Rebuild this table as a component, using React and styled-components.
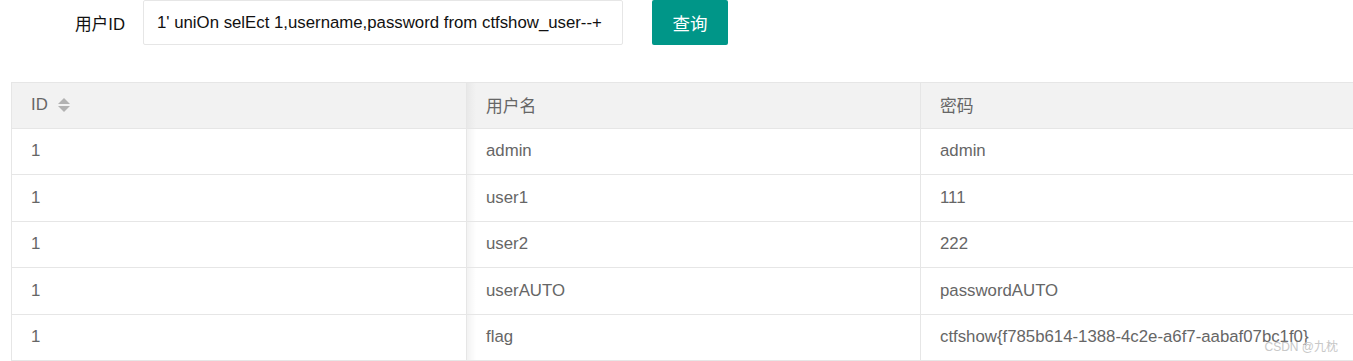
import React from "react";
import styled, { createGlobalStyle } from "styled-components";

const GlobalStyle = createGlobalStyle`
  html, body {
    margin: 0;
    padding: 0;
    background: #fff;
    overflow: hidden;
  }
  body {
    font-family: "Liberation Sans", Arial, "Noto Sans CJK SC", sans-serif;
    color: #333;
  }
`;

const rows = [
  { id: "1", name: "admin", pass: "admin" },
  { id: "1", name: "user1", pass: "111" },
  { id: "1", name: "user2", pass: "222" },
  { id: "1", name: "userAUTO", pass: "passwordAUTO" },
  { id: "1", name: "flag", pass: "ctfshow{f785b614-1388-4c2e-a6f7-aabaf07bc1f0}" },
];

function App() {
  return (
    <Page>
      <GlobalStyle />
      <Form>
        <Label>用户ID</Label>
        <Input defaultValue="1' uniOn selEct 1,username,password from ctfshow_user--+" />
        <Button>查询</Button>
      </Form>

      <Table>
        <HeadCell>
          ID
          <SortIcon>
            <Arrow up />
            <Arrow />
          </SortIcon>
        </HeadCell>
        <HeadCell shadow>用户名</HeadCell>
        <HeadCell>密码</HeadCell>
        {rows.map((r, i) => (
          <React.Fragment key={i}>
            <Cell>{r.id}</Cell>
            <Cell shadow>{r.name}</Cell>
            <Cell>{r.pass}</Cell>
          </React.Fragment>
        ))}
      </Table>

      <Watermark>CSDN @九枕</Watermark>
    </Page>
  );
}

export default App;

const Page = styled.div`
  position: relative;
  width: 1353px;
  height: 361px;
  overflow: hidden;
`;

const Form = styled.div`
  display: flex;
  align-items: center;
  height: 45px;
`;

const Label = styled.label`
  width: 125px;
  margin-right: 18px;
  text-align: right;
  font-size: 16.7px;
  color: #111;
`;

const Input = styled.input`
  box-sizing: border-box;
  width: 480px;
  height: 45px;
  padding: 0 13px;
  border: 1px solid #e6e6e6;
  border-radius: 2px;
  font-family: inherit;
  font-size: 16.8px;
  color: #111;
  outline: none;
`;

const Button = styled.button`
  width: 76px;
  height: 45px;
  margin-left: 29px;
  border: none;
  border-radius: 2px;
  background: #009688;
  color: #fff;
  font-family: inherit;
  font-size: 17.5px;
  padding: 0;
`;

const Table = styled.div`
  display: grid;
  grid-template-columns: 455px 454px 455px;
  grid-template-rows: 45.5px;
  grid-auto-rows: 46.5px;
  margin: 37px 0 0 11px;
  width: 1364px;
  border-top: 1px solid #e6e6e6;
  border-left: 1px solid #e6e6e6;
  box-sizing: border-box;
  font-size: 16.8px;
  color: #666;
`;

const Cell = styled.div`
  display: flex;
  align-items: center;
  padding: 0 19px;
  border-right: 1px solid #e6e6e6;
  border-bottom: 1px solid #e6e6e6;
  background: ${(p) =>
    p.shadow
      ? "linear-gradient(to right, rgba(0,0,0,0.05), rgba(0,0,0,0) 9px), #fff"
      : "#fff"};
  white-space: nowrap;
`;

const HeadCell = styled(Cell)`
  background: ${(p) =>
    p.shadow
      ? "linear-gradient(to right, rgba(0,0,0,0.04), rgba(0,0,0,0) 9px), #f2f2f2"
      : "#f2f2f2"};
`;

const SortIcon = styled.span`
  display: inline-flex;
  flex-direction: column;
  gap: 2px;
  margin-left: 10px;
`;

const Arrow = styled.span`
  width: 0;
  height: 0;
  border-left: 6px solid transparent;
  border-right: 6px solid transparent;
  ${(p) =>
    p.up
      ? "border-bottom: 6px solid #b2b2b2;"
      : "border-top: 6px solid #b2b2b2;"}
`;

const Watermark = styled.div`
  position: absolute;
  right: 15px;
  bottom: 7px;
  font-size: 12px;
  color: #c8c8c8;
  text-shadow: 0 0 1px rgba(255, 255, 255, 0.8);
`;
